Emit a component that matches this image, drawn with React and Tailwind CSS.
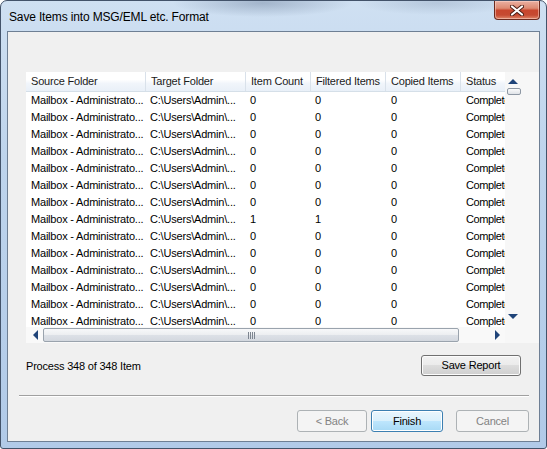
import React from "react";

const font = { fontFamily: '"Liberation Sans", Arial, sans-serif' };

const headers = [
  { label: "Source Folder", cls: "w-[120px]" },
  { label: "Target Folder", cls: "w-[100px]" },
  { label: "Item Count", cls: "w-[65px]" },
  { label: "Filtered Items", cls: "w-[75px]" },
  { label: "Copied Items", cls: "w-[75px]" },
  { label: "Status", cls: "w-[80px]" },
];

const rows = Array.from({ length: 14 }, (_, i) => (i === 7 ? ["1", "1", "0"] : ["0", "0", "0"]));

function Tri({ dir }) {
  if (dir === "up")
    return (
      <svg width="10" height="5" viewBox="0 0 10 5"><path d="M0 5 L5 0 L10 5 Z" fill="#1f4479" /></svg>
    );
  if (dir === "down")
    return (
      <svg width="10" height="5" viewBox="0 0 10 5"><path d="M0 0 L10 0 L5 5 Z" fill="#1f4479" /></svg>
    );
  if (dir === "left")
    return (
      <svg width="5" height="10" viewBox="0 0 5 10"><path d="M5 0 L5 10 L0 5 Z" fill="#1f4479" /></svg>
    );
  return (
    <svg width="5" height="10" viewBox="0 0 5 10"><path d="M0 0 L5 5 L0 10 Z" fill="#1f4479" /></svg>
  );
}

function Btn({ children, kind, cls }) {
  const base = "h-full rounded-[3px] border flex items-center justify-center text-[11px] tracking-[-0.2px] ";
  let k =
    "border-[#707070] text-black bg-[linear-gradient(180deg,#f2f2f2_0%,#ebebeb_50%,#dddddd_50%,#cfcfcf_100%)] shadow-[inset_0_0_0_1px_#fcfcfc]";
  if (kind === "disabled") k = "border-[#adb2b5] text-[#838383] bg-[#f4f4f4]";
  if (kind === "default")
    k =
      "border-[#3c7fb1] text-black bg-[linear-gradient(180deg,#eaf6fd_0%,#d9f0fc_50%,#bee6fd_50%,#a7d9f5_100%)] shadow-[inset_0_0_0_1px_#ffffff]";
  return <div className={base + k + " " + cls}>{children}</div>;
}

export default function App() {
  return (
    <div className="w-[547px] h-[449px] bg-white" style={font}>
      <div className="relative w-[547px] h-[449px] flex flex-col rounded-t-[7px] rounded-b-[3px] border border-[#43536a] bg-[radial-gradient(ellipse_90px_14px_at_48%_2px,rgba(80,100,130,0.35),transparent),radial-gradient(ellipse_80px_12px_at_80%_2px,rgba(80,100,130,0.2),transparent),linear-gradient(180deg,#cfe0f2_0%,#bed4ec_35%,#b1cae8_100%)]">
        <div className="h-[30px] flex items-center pl-[8px] pt-[1px] text-[12px] tracking-[-0.15px] text-black">
          Save Items into MSG/EML etc. Format
        </div>
        <div className="absolute top-0 right-[6px] w-[46px] h-[19px] rounded-b-[4px] border border-t-0 border-[#6b2a1e] bg-[linear-gradient(180deg,#eab0a2_0%,#dd8a72_40%,#c8462d_52%,#c64a31_78%,#e0876a_100%)] flex items-center justify-center shadow-[inset_0_0_0_1px_rgba(255,220,210,0.5)]">
          <svg width="14" height="11" viewBox="0 0 14 11">
            <path d="M2 1.5 L12 9.5 M12 1.5 L2 9.5" stroke="#4a1d14" strokeWidth="4" strokeLinecap="round" />
            <path d="M2 1.5 L12 9.5 M12 1.5 L2 9.5" stroke="#ffffff" strokeWidth="2.2" strokeLinecap="round" />
          </svg>
        </div>

        <div className="mx-[6px] mb-[6px] flex-1 border border-[#6e7f94] bg-[#f0f0f0] flex flex-col text-[11px] tracking-[-0.2px] text-black">
          <div className="pt-[40px] pl-[18px]">
            <div className="flex h-[271px]">
              <div className="w-[479px] flex flex-col bg-white">
                <div className="h-[20px] flex overflow-hidden shrink-0 border-b border-[#d5dfe8] bg-[linear-gradient(180deg,#ffffff_0%,#ffffff_40%,#f1f5fb_60%,#e9f0f8_100%)]">
                  {headers.map((h) => (
                    <div
                      key={h.label}
                      className={h.cls + " shrink-0 pl-[5px] flex items-center border-r border-[#d9e1ea] text-[#1b1b1b] whitespace-nowrap"}
                    >
                      {h.label}
                    </div>
                  ))}
                </div>
                <div className="h-[235px] overflow-hidden">
                  {rows.map((r, i) => (
                    <div key={i} className="h-[17px] flex whitespace-nowrap">
                      <div className="w-[120px] shrink-0 pl-[5px] flex items-center">Mailbox - Administrato...</div>
                      <div className="w-[100px] shrink-0 pl-[4px] flex items-center">C:\Users\Admin\...</div>
                      <div className="w-[65px] shrink-0 pl-[4px] flex items-center">{r[0]}</div>
                      <div className="w-[75px] shrink-0 pl-[4px] flex items-center">{r[1]}</div>
                      <div className="w-[75px] shrink-0 pl-[5px] flex items-center">{r[2]}</div>
                      <div className="w-[80px] shrink-0 pl-[5px] flex items-center tracking-[-0.4px]">Completed</div>
                    </div>
                  ))}
                </div>
                <div className="h-[16px] flex items-center bg-[#f9f9f9]">
                  <div className="ml-[7px] flex"><Tri dir="left" /></div>
                  <div className="ml-[5px] w-[416px] h-[14px] rounded-[2px] border border-[#9aa3ad] bg-[linear-gradient(180deg,#f7f8fa_0%,#eceef1_50%,#dde1e7_51%,#d3d8df_100%)] flex items-center justify-center">
                    <div className="flex gap-[1px] h-[7px]">
                      <div className="w-[1px] bg-[#7d8590]" />
                      <div className="w-[1px] bg-[#7d8590]" />
                      <div className="w-[1px] bg-[#7d8590]" />
                      <div className="w-[1px] bg-[#7d8590]" />
                    </div>
                  </div>
                  <div className="ml-[36px] flex"><Tri dir="right" /></div>
                </div>
              </div>
              <div className="w-[34px] bg-[#f7f7f7] flex flex-col pt-[7px] pb-[24px]">
                <div className="pl-[3px] flex"><Tri dir="up" /></div>
                <div className="mt-[4px] ml-[2px] w-[14px] h-[7px] rounded-[2px] border border-[#8e98a4] bg-[linear-gradient(180deg,#fbfbfb,#dfe3e8)]" />
                <div className="flex-1" />
                <div className="pl-[3px] flex"><Tri dir="down" /></div>
              </div>
            </div>
          </div>

          <div className="mt-[12px] h-[21px] pl-[18px] pr-[18px] flex items-center justify-between">
            <div className="pt-[1px]">Process 348 of 348 Item</div>
            <Btn cls="w-[100px]">Save Report</Btn>
          </div>

          <div className="mt-[19px] ml-[11px] mr-[10px] border-t border-[#a0a0a0] border-b border-b-white" />

          <div className="mt-[13px] h-[22px] pr-[10px] flex justify-end">
            <Btn kind="disabled" cls="w-[70px]">&lt; Back</Btn>
            <Btn kind="default" cls="w-[72px] ml-[4px]">Finish</Btn>
            <Btn kind="disabled" cls="w-[73px] ml-[13px]">Cancel</Btn>
          </div>
        </div>
      </div>
    </div>
  );
}
